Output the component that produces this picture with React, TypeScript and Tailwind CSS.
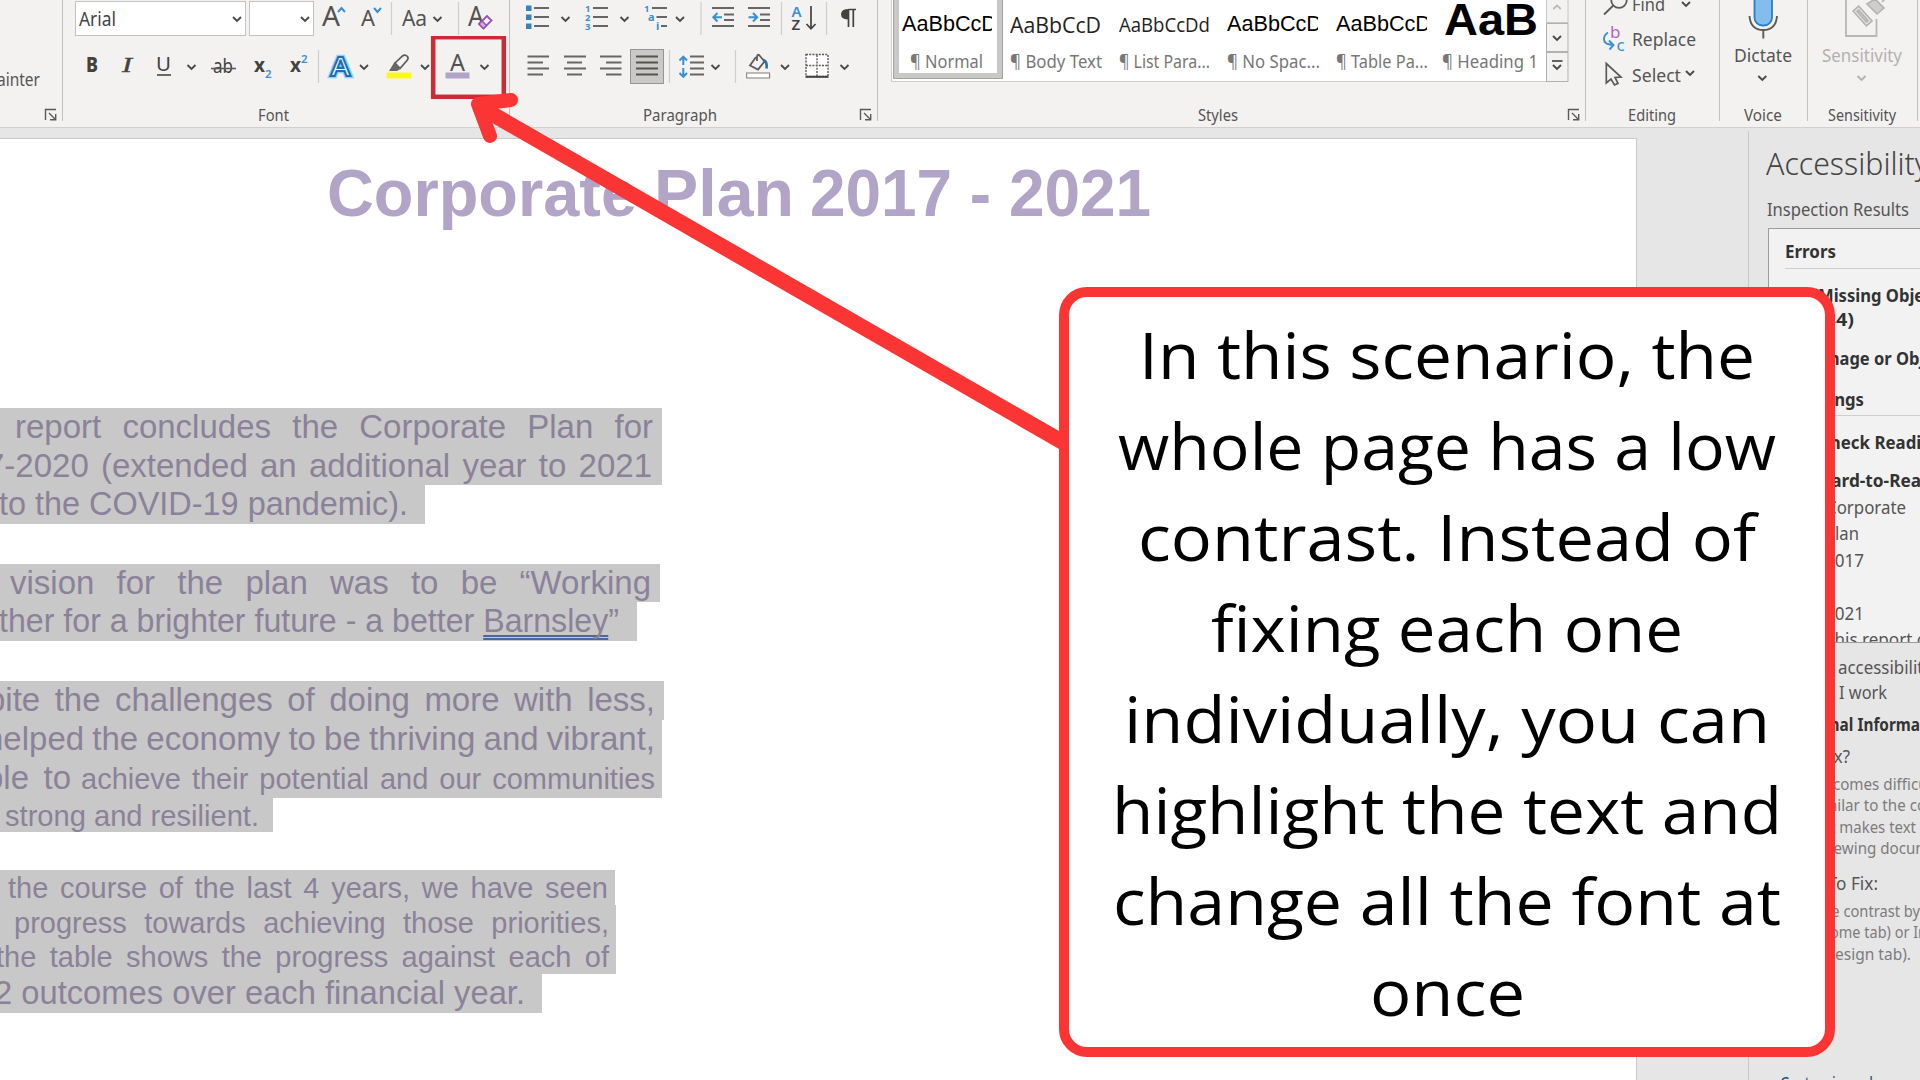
import { useLayoutEffect, useRef } from "react";
import type { ReactNode } from "react";

type FitProps = { className?: string; by?: "glyph" | "word"; children: ReactNode };

/** One line of text stretched or squeezed to the width of its box. */
function Fit({ className = "", by = "glyph", children }: FitProps) {
  const box = useRef<HTMLDivElement>(null);
  const text = useRef<HTMLSpanElement>(null);
  useLayoutEffect(() => {
    const b = box.current;
    const t = text.current;
    if (!b || !t) return;
    t.style.transform = "none";
    t.style.wordSpacing = "0px";
    const natural = t.getBoundingClientRect().width;
    const wanted = b.getBoundingClientRect().width;
    if (by === "word") {
      const gaps = (t.textContent ?? "").split(" ").length - 1;
      if (gaps > 0) t.style.wordSpacing = `${(wanted - natural) / gaps}px`;
    } else {
      t.style.transform = `scaleX(${wanted / natural})`;
    }
  });
  return (
    <div ref={box} className={"shrink-0 whitespace-nowrap " + className}>
      <span ref={text} className="inline-block origin-left whitespace-pre">
        {children}
      </span>
    </div>
  );
}

/** Icon tile; its drawing uses ribbon coordinates. */
function Tile({ x, y, w, h, children }: { x: number; y: number; w: number; h: number; children?: ReactNode }) {
  return (
    <svg width={w} height={h} viewBox={`${x} ${y} ${w} ${h}`} className="block shrink-0" fill="none">
      {children}
    </svg>
  );
}

const INK = "#5c5a58";
const BLUE = "#3b8fd0";

function Chevron({ x, y, c = "#4a4a4a" }: { x: number; y: number; c?: string }) {
  return <path d={`M${x - 4} ${y - 2} L${x} ${y + 2} L${x + 4} ${y - 2}`} stroke={c} strokeWidth="1.9" />;
}

function Rules({ rows, c = "#686664" }: { rows: [number, number, number][]; c?: string }) {
  return (
    <g stroke={c} strokeWidth="2">
      {rows.map(([a, b, y]) => (
        <line key={`${a}-${y}`} x1={a} x2={b} y1={y} y2={y} />
      ))}
    </g>
  );
}

function Sep({ x, y1, y2 }: { x: number; y1: number; y2: number }) {
  return <line x1={x} x2={x} y1={y1} y2={y2} stroke="#d0cecc" strokeWidth="1.2" />;
}

function Launcher() {
  return (
    <svg width="14" height="14" viewBox="0 0 14 14" fill="none" stroke="#5a5a5a" strokeWidth="1.4" className="shrink-0">
      <path d="M1.5 12V1.5H12" />
      <path d="M5 5L11.5 11.5M11.7 6V11.8H6" />
    </svg>
  );
}

function GroupEdge() {
  return <div className="h-[121px] w-px shrink-0 bg-[#c3c1bf]" />;
}

function FontGroup() {
  return (
    <div className="flex h-[127px] w-[446px] shrink-0 flex-col">
      <div className="flex h-9 items-start">
        <div className="ml-3 mt-px flex h-[35px] w-[171px] items-center justify-between border border-[#c4c2c0] bg-white pl-[3px]">
          <Fit className="w-[37px] text-[19px] leading-[34px] text-[#444]">Arial</Fit>
          <Tile x={228} y={2} w={16} h={33}>
            <Chevron x={236} y={19} />
          </Tile>
        </div>
        <div className="ml-[3px] mt-px flex h-[35px] w-[65px] items-center justify-end border border-[#c4c2c0] bg-white">
          <Tile x={296} y={2} w={16} h={33}>
            <Chevron x={304} y={19} />
          </Tile>
        </div>
        <Tile x={314} y={0} w={195} h={36}>
          <g fill="#55534f" fontFamily="Noto Sans, sans-serif">
            <text x="322" y="26" fontSize="28" textLength="18" lengthAdjust="spacingAndGlyphs">A</text>
            <text x="361" y="26" fontSize="22" textLength="14" lengthAdjust="spacingAndGlyphs">A</text>
            <text x="402" y="26" fontSize="21" textLength="25" lengthAdjust="spacing">Aa</text>
            <text x="468" y="26" fontSize="27" textLength="16" lengthAdjust="spacingAndGlyphs">A</text>
          </g>
          <path d="M338 12L341.5 8L345 12M374 8L377.5 12L381 8" stroke={BLUE} strokeWidth="2" />
          <Sep x={391.5} y1={2} y2={35} />
          <Chevron x={437.5} y={19} />
          <Sep x={458.5} y1={2} y2={35} />
          <path d="M479 24L487 16L491.5 20.5L483.5 28.5Z" fill="#f3f2f1" stroke="#9b4fb0" strokeWidth="1.8" />
          <path d="M479 24L482 21L486.5 25.5L483.5 28.5Z" fill="#d9a9e4" stroke="#9b4fb0" strokeWidth="1.5" />
        </Tile>
      </div>
      <div className="flex h-16">
        <Tile x={63} y={36} w={446} h={64}>
          <g fill="#44423f" fontFamily="Noto Sans, sans-serif">
            <text x="86" y="72" fontSize="21" fontWeight="800" textLength="12" lengthAdjust="spacingAndGlyphs">B</text>
            <text x="122" y="72" fontSize="21" fontStyle="italic" fontFamily="Liberation Serif, serif" stroke="#44423f" strokeWidth=".4" textLength="10" lengthAdjust="spacingAndGlyphs">I</text>
            <text x="156" y="71" fontSize="20" textLength="15" lengthAdjust="spacingAndGlyphs">U</text>
            <text x="213" y="73" fontSize="19" textLength="20" lengthAdjust="spacingAndGlyphs">ab</text>
            <text x="254" y="72" fontSize="20" fontWeight="700" textLength="11" lengthAdjust="spacingAndGlyphs">x</text>
            <text x="290" y="72" fontSize="20" fontWeight="700" textLength="11" lengthAdjust="spacingAndGlyphs">x</text>
          </g>
          <g fill={BLUE} fontFamily="Noto Sans, sans-serif" fontSize="11.5" fontWeight="600">
            <text x="265" y="78">2</text>
            <text x="301" y="62.5">2</text>
          </g>
          <line x1="157" x2="171" y1="75" y2="75" stroke={INK} strokeWidth="1.8" />
          <line x1="211" x2="236" y1="68.5" y2="68.5" stroke={INK} strokeWidth="1.6" />
          <Chevron x={191.5} y={67} />
          <Sep x={318.5} y1={50} y2={83} />
          <text x="330.5" y="75.5" fontSize="27" fontWeight="600" fontFamily="Noto Sans, sans-serif" fill="#d8ecfa" stroke="#8fd0fa" strokeWidth="4.5" textLength="20" lengthAdjust="spacingAndGlyphs">A</text>
          <text x="330.5" y="75.5" fontSize="27" fontWeight="600" fontFamily="Noto Sans, sans-serif" fill="#e9f4fc" stroke="#1f6fae" strokeWidth="1.9" textLength="20" lengthAdjust="spacingAndGlyphs">A</text>
          <Chevron x={364} y={67} />
          <rect x="386.500" y="72.500" width="25" height="6" fill="#fbf91c" />
          <path d="M395 63L402.500 56Q405 54 407.500 56.500Q408.800 58.500 407 60.500L400 68.500Z" fill="#f3f2f1" stroke={INK} strokeWidth="1.700" />
          <path d="M394.500 62L401 68.500L397 71H389Z" fill="#686664" />
          <Chevron x={425} y={67} />
          <text x="450" y="71" fontSize="23" fontFamily="Noto Sans, sans-serif" fill="#55534f" textLength="15" lengthAdjust="spacingAndGlyphs">A</text>
          <rect x="445.500" y="72.500" width="24" height="6" fill="#b1a4c6" />
          <Chevron x={484.500} y={67} />
          <rect x="433.200" y="37.200" width="70.600" height="59.600" stroke="#cb2a36" strokeWidth="4.500" />
        </Tile>
      </div>
      <Fit className="ml-[195px] w-[31px] text-[15.5px] leading-[30px] text-[#555]">Font</Fit>
    </div>
  );
}

function ParagraphGroup() {
  return (
    <div className="flex h-[127px] w-[367px] shrink-0 flex-col">
      <Tile x={510} y={0} w={367} h={40}>
        {[8, 17, 26].map((y) => (
          <rect key={y} x="526" y={y - 2.5} width="5.500" height="5.500" fill="#3a81b4" />
        ))}
        <Rules rows={[[534, 549, 8], [534, 549, 17], [534, 549, 26]]} />
        <Chevron x={565.5} y={19} />
        <g fill={BLUE} fontFamily="Noto Sans, sans-serif" fontSize="9.500" fontWeight="700">
          <text x="585" y="12">1</text>
          <text x="585" y="21">2</text>
          <text x="585" y="30">3</text>
          <text x="644" y="12">1</text>
          <text x="648" y="20.500" fontSize="11">a</text>
          <text x="656" y="30" fontSize="11">i</text>
        </g>
        <Rules rows={[[593, 608, 8], [593, 608, 17], [593, 608, 26]]} />
        <Chevron x={624.5} y={19} />
        <Rules rows={[[652, 667, 8], [656.5, 667, 17], [661, 667, 26]]} />
        <Chevron x={680} y={19} />
        <Sep x={701} y1={2} y2={35} />
        <Rules rows={[[712, 734, 8], [724, 734, 14.5], [724, 734, 20], [712, 734, 26]]} />
        <path d="M722 17.200H714M717.500 13L713.300 17.200L717.500 21.500" stroke={BLUE} strokeWidth="2" />
        <Rules rows={[[748, 770, 8], [760, 770, 14.5], [760, 770, 20], [748, 770, 26]]} />
        <path d="M748.500 17.200H756.500M753 13L757.200 17.200L753 21.500" stroke={BLUE} strokeWidth="2" />
        <Sep x={781.500} y1={2} y2={35} />
        <g fontFamily="Noto Sans, sans-serif" fontSize="15" fontWeight="600">
          <text x="791.500" y="16.500" fill={BLUE}>A</text>
          <text x="791.500" y="30" fill="#44423f">Z</text>
        </g>
        <path d="M811 6V28.500M806.500 24L811 28.800L815.500 24" stroke="#44423f" strokeWidth="1.700" />
        <Sep x={826.500} y1={2} y2={35} />
        <path d="M848.500 9.500H856M848.500 10V27M853.300 10V27" stroke="#44423f" strokeWidth="1.700" />
        <path d="M849 9V19.500Q841 19.500 841 14.200Q841 9 849 9Z" fill="#44423f" />
      </Tile>
      <Tile x={510} y={40} w={367} h={60}>
        <Rules rows={[[527.5, 549, 56.500], [527.5, 543, 62.500], [527.5, 549, 68.500], [527.5, 543, 74.500]]} />
        <Rules rows={[[564, 586, 56.500], [567, 582, 62.500], [564, 586, 68.500], [567, 582, 74.500]]} />
        <Rules rows={[[600, 621.500, 56.500], [606, 621.500, 62.500], [600, 621.500, 68.500], [606, 621.500, 74.500]]} />
        <rect x="630.500" y="49.500" width="33" height="34" fill="#cbc9c8" stroke="#979593" />
        <Rules c="#55534f" rows={[[636, 658, 56.500], [636, 658, 62.500], [636, 658, 68.500], [636, 658, 74.500]]} />
        <Sep x={669.500} y1={50} y2={83} />
        <path d="M683.300 65V57.500M679.500 60.500L683.300 56.700L687 60.500M683.300 68V76M679.500 73L683.300 76.800L687 73" stroke={BLUE} strokeWidth="2" />
        <Rules rows={[[690, 704, 56.500], [690, 704, 62.500], [690, 704, 68.500], [690, 704, 74.500]]} />
        <Chevron x={715.500} y={67} />
        <Sep x={735.500} y1={50} y2={83} />
        <path d="M756 57L750 65.500L758 69.500L764.500 61.500L759.500 55.500Q757.500 53.500 757 57V61" stroke={INK} strokeWidth="1.800" />
        <path d="M763 60Q767.500 61 766.500 68.500" stroke="#2d6da6" strokeWidth="2.600" />
        <rect x="746.600" y="73" width="23" height="5" fill="#fff" stroke="#8a8886" strokeWidth="1.100" />
        <Chevron x={785} y={67} />
        <rect x="806" y="54.500" width="22" height="22" fill="#fff" stroke={INK} strokeWidth="1.400" strokeDasharray="2 1.200" />
        <path d="M817 55V76M806 65.500H828" stroke={INK} strokeWidth="1.400" strokeDasharray="2 1.200" />
        <path d="M805.500 76.800H828.500" stroke="#44423f" strokeWidth="2" />
        <Chevron x={844.500} y={67} />
      </Tile>
      <div className="flex items-start">
        <Fit className="ml-[133px] w-[74px] text-[15.5px] leading-[30px] text-[#555]">Paragraph</Fit>
        <div className="ml-[142px] mt-2">
          <Launcher />
        </div>
      </div>
    </div>
  );
}

function StylesGroup() {
  return (
    <div className="flex h-[127px] w-[707px] shrink-0 flex-col">
      <div className="ml-[13px] flex h-[82px] w-[678px]">
        <div className="flex h-[82px] w-[655px] border-b border-l border-[#cfcdcb] bg-white">
          <div className="ml-px h-[79px] w-[110px] shrink-0 border border-t-0 border-[#a3a3a3]">
            <div className="h-[78px] border-[5px] border-t-0 border-[#c8c8c6] pl-[3px]">
              <div className="w-[90px] overflow-hidden">
                <Fit className="h-9 w-[95px] font-['Liberation_Sans'] text-[22px] leading-[48px] text-black">AaBbCcD</Fit>
              </div>
              <Fit className="ml-2 w-[73px] text-[17.5px] leading-[50px] text-[#777]">¶ Normal</Fit>
            </div>
          </div>
          <div className="ml-[7px] w-[109px] shrink-0">
            <Fit className="h-9 w-[91px] font-['Open_Sans'] text-[22px] leading-[49px] text-[#222]">AaBbCcD</Fit>
            <Fit className="w-[92px] text-[17.5px] leading-[50px] text-[#777]">¶ Body Text</Fit>
          </div>
          <div className="w-[108px] shrink-0">
            <Fit className="h-9 w-[91px] font-['Open_Sans'] text-[19.5px] leading-[50px] text-[#222]">AaBbCcDd</Fit>
            <Fit className="w-[91px] text-[17.5px] leading-[50px] text-[#777]">¶ List Para...</Fit>
          </div>
          <div className="w-[109px] shrink-0">
            <div className="w-[91px] overflow-hidden">
              <Fit className="h-9 w-[95px] font-['Liberation_Sans'] text-[22px] leading-[48px] text-black">AaBbCcD</Fit>
            </div>
            <Fit className="w-[93px] text-[17.5px] leading-[50px] text-[#777]">¶ No Spac...</Fit>
          </div>
          <div className="w-[106px] shrink-0">
            <div className="w-[91px] overflow-hidden">
              <Fit className="h-9 w-[95px] font-['Liberation_Sans'] text-[22px] leading-[48px] text-black">AaBbCcD</Fit>
            </div>
            <Fit className="w-[92px] text-[17.5px] leading-[50px] text-[#777]">¶ Table Pa...</Fit>
          </div>
          <div className="w-[98px] shrink-0">
            <Fit className="ml-[2px] h-9 w-[94px] font-['Liberation_Sans'] text-[45px] font-bold leading-[39px] text-black">AaB</Fit>
            <Fit className="w-[96px] text-[17.5px] leading-[50px] text-[#777]">¶ Heading 1</Fit>
          </div>
        </div>
        <Tile x={1541} y={0} w={23} h={82}>
          <path d="M1541.500 -2V22.500H1563V-2" stroke="#c8c6c4" />
          <rect x="1541.500" y="23.500" width="21.500" height="28" stroke="#b3b1af" />
          <rect x="1541.500" y="52.500" width="21.500" height="29" stroke="#b3b1af" />
          <path d="M1548.200 9L1552 5.500L1555.800 9" stroke="#bbb" strokeWidth="1.700" />
          <Chevron x={1552} y={38} />
          <path d="M1547 61H1557.500" stroke="#4a4a4a" strokeWidth="1.700" />
          <Chevron x={1552} y={67} />
        </Tile>
      </div>
      <div className="mt-[18px] flex items-start">
        <Fit className="ml-[320px] w-[40px] text-[15.5px] leading-[30px] text-[#555]">Styles</Fit>
        <div className="ml-[329px] mt-2">
          <Launcher />
        </div>
      </div>
    </div>
  );
}

function EditingGroup() {
  return (
    <div className="flex h-[127px] w-[133px] shrink-0 flex-col">
      <div className="flex h-[100px]">
        <Tile x={1586} y={0} w={46} h={100}>
          <circle cx="1619" cy="0" r="7.800" stroke={INK} strokeWidth="1.800" />
          <path d="M1613.300 5.500L1604 14.500" stroke={INK} strokeWidth="1.800" />
          <g fontFamily="Noto Sans, sans-serif" fontSize="17">
            <text x="1610" y="38" fill="#b661c4">b</text>
            <text x="1616.500" y="51" fill={BLUE}>c</text>
          </g>
          <path d="M1608 32.500Q1602.500 36 1604.500 41.500Q1606 44.500 1613 45M1609 40.500L1613.500 45L1609.500 49.500" stroke={BLUE} strokeWidth="1.900" />
          <path d="M1606.300 63.500V83L1611 79L1614.500 85L1618 83.300L1615 77.500L1621 77Z" stroke={INK} strokeWidth="1.700" />
        </Tile>
        <div className="flex w-[64px] flex-col text-[17.5px] text-[#555]">
          <Fit className="h-[27px] w-[33px] leading-[9px]">Find</Fit>
          <Fit className="h-9 w-[64px] leading-[24px]">Replace</Fit>
          <Fit className="w-[49px] leading-[24px]">Select</Fit>
        </div>
      </div>
      <Fit className="ml-[42px] w-[48px] text-[15.5px] leading-[30px] text-[#555]">Editing</Fit>
    </div>
  );
}

function VoiceGroup() {
  return (
    <div className="flex h-[127px] w-[87px] shrink-0 flex-col">
      <Tile x={1720} y={0} w={87} h={42}>
        <rect x="1754.500" y="-20" width="17.500" height="45.500" rx="8" fill="#83bdee" stroke="#2b7fc7" strokeWidth="1.800" />
        <path d="M1749.500 16Q1750.500 30 1763.300 30Q1776 30 1777 16M1763.300 30V38.500" stroke={INK} strokeWidth="1.900" />
      </Tile>
      <Fit className="ml-[14px] h-[26px] w-[58px] text-[17.5px] leading-[26px] text-[#555]">Dictate</Fit>
      <Tile x={1720} y={68} w={87} h={32}>
        <Chevron x={1762.300} y={78} />
      </Tile>
      <Fit className="ml-6 w-[38px] text-[15.5px] leading-[30px] text-[#555]">Voice</Fit>
    </div>
  );
}

function SensitivityGroup() {
  return (
    <div className="flex h-[127px] w-[109px] shrink-0 flex-col">
      <Tile x={1808} y={0} w={109} h={42}>
        <path d="M1846 -2V36H1876.500V19" stroke="#b9b7b5" strokeWidth="1.800" />
        <g stroke="#b5b3b1" strokeWidth="1.600">
          <rect x="1863" y="6.500" width="7.500" height="20" fill="#e3e1df" transform="translate(-4 0) rotate(-42 1866 16.500)" />
          <rect x="1865.700" y="9.500" width="2" height="14" transform="translate(-4 0) rotate(-42 1866 16.500)" />
          <path d="M1867 4L1877 14L1884 8L1875 -1Z" fill="#cfcdcb" />
          <path d="M1882 2L1886 -2" />
        </g>
      </Tile>
      <Fit className="ml-[14px] h-[26px] w-[80px] text-[17.5px] leading-[26px] text-[#b3b1af]">Sensitivity</Fit>
      <Tile x={1808} y={68} w={109} h={32}>
        <Chevron x={1861.500} y={78} c="#b3b1af" />
      </Tile>
      <Fit className="ml-5 w-[68px] text-[15.5px] leading-[30px] text-[#555]">Sensitivity</Fit>
    </div>
  );
}

function Ribbon() {
  return (
    <header className="flex h-32 w-[1920px] shrink-0 overflow-hidden border-b border-[#d2d0ce] bg-[#f3f2f1]">
      <div className="flex h-[127px] w-[62px] shrink-0 flex-col">
        <Fit className="-ml-[3px] mt-[66px] h-[42px] w-[43px] text-[17.5px] leading-[26px] text-[#555]">ainter</Fit>
        <div className="ml-[44px]">
          <Launcher />
        </div>
      </div>
      <GroupEdge />
      <FontGroup />
      <GroupEdge />
      <ParagraphGroup />
      <GroupEdge />
      <StylesGroup />
      <GroupEdge />
      <div className="relative">
        <EditingGroup />
        <svg className="absolute left-[90px] top-0" width="24" height="90" viewBox="1676 0 24 90" fill="none">
          <Chevron x={1686} y={4} />
          <Chevron x={1690} y={73} />
        </svg>
      </div>
      <GroupEdge />
      <VoiceGroup />
      <GroupEdge />
      <SensitivityGroup />
      <GroupEdge />
    </header>
  );
}

function Page() {
  return (
    <article className="mt-[10px] h-[942px] w-[1637px] overflow-hidden border-r border-t border-[#c9c9c9] bg-white font-['Liberation_Sans',sans-serif] text-[33px] leading-[37px] text-[#8b8299]">
      <h1 className="ml-[327px] mt-4 flex h-[76px] text-[66px] font-bold leading-[76px] text-[#b1a4c6]">
        <Fit className="w-[310px]">Corporate</Fit>
        <Fit className="ml-[17px] w-[140px]">Plan</Fit>
        <Fit className="ml-4 w-[341px]">2017 - 2021</Fit>
      </h1>

      <section className="mt-[177px]">
        <div className="h-[38.5px] w-[662px] bg-[#c8c8c8]">
          <Fit by="word" className="ml-[15px] w-[638px]">report concludes the Corporate Plan for</Fit>
        </div>
        <div className="h-[38.5px] w-[662px] bg-[#c8c8c8]">
          <Fit by="word" className="-ml-[14px] w-[666px] leading-[38px]">7-2020 (extended an additional year to 2021</Fit>
        </div>
        <div className="h-[39px] w-[425px] bg-[#c8c8c8]">
          <Fit className="-ml-px w-[409px]">to the COVID-19 pandemic).</Fit>
        </div>
      </section>

      <section className="mt-[39.5px]">
        <div className="h-[38.5px] w-[660px] bg-[#c8c8c8]">
          <Fit by="word" className="ml-[10px] w-[641px]">vision for the plan was to be “Working</Fit>
        </div>
        <div className="h-[38.5px] w-[637px] bg-[#c8c8c8]">
          <Fit className="-ml-px w-[620px]">
            ther for a brighter future - a better{" "}
            <span className="underline decoration-[#4a66a5] decoration-double decoration-2 underline-offset-[3px] [text-decoration-skip-ink:none]">Barnsley</span>”
          </Fit>
        </div>
      </section>

      <section className="mt-[40.5px]">
        <div className="h-[39px] w-[664px] bg-[#c8c8c8]">
          <Fit by="word" className="-ml-[13px] w-[668px]">pite the challenges of doing more with less,</Fit>
        </div>
        <div className="h-[39px] w-[662px] bg-[#c8c8c8]">
          <Fit by="word" className="-ml-[15px] w-[670px]">helped the economy to be thriving and vibrant,</Fit>
        </div>
        <div className="flex h-[38.5px] w-[662px] items-baseline bg-[#c8c8c8]">
          <Fit by="word" className="-ml-[15px] w-[86px] leading-[38px]">ble to</Fit>
          <Fit by="word" className="ml-[10px] w-[574px] text-[29px]">achieve their potential and our communities</Fit>
        </div>
        <div className="h-[34px] w-[273px] bg-[#c8c8c8]">
          <Fit className="ml-[5px] w-[254px] text-[29px] leading-9">strong and resilient.</Fit>
        </div>
      </section>

      <section className="mt-[38.5px] text-[29px] leading-9">
        <div className="h-[35px] w-[615px] bg-[#c8c8c8]">
          <Fit by="word" className="ml-2 w-[600px]">the course of the last 4 years, we have seen</Fit>
        </div>
        <div className="h-[34.5px] w-[616px] bg-[#c8c8c8]">
          <Fit by="word" className="ml-[14px] w-[595px]">progress towards achieving those priorities,</Fit>
        </div>
        <div className="h-[34.5px] w-[616px] bg-[#c8c8c8]">
          <Fit by="word" className="-ml-[4px] w-[613px] leading-[35px]">the table shows the progress against each of</Fit>
        </div>
        <div className="h-[38.5px] w-[542px] bg-[#c8c8c8]">
          <Fit className="-ml-[6px] w-[531px] text-[33px] leading-[37px]">2 outcomes over each financial year.</Fit>
        </div>
      </section>
    </article>
  );
}

function AccessibilityPane() {
  return (
    <aside className="mt-[3px] h-[949px] w-[172px] overflow-hidden border-l border-[#c9c9c9] bg-[#e6e6e6] text-[17.5px] leading-6 text-[#555]">
      <Fit className="ml-[17px] mt-[14px] h-[52px] w-[163px] text-[31px] font-light leading-[36px] text-[#444]">Accessibility</Fit>
      <Fit className="ml-[18px] h-[31px] w-[142px]">Inspection Results</Fit>

      <div className="ml-[19px] h-[415px] w-[160px] overflow-hidden border border-[#9c9c9c] bg-[#f2f2f2]">
        <div className="ml-4 h-10 border-b border-[#cfcfcf] pt-2.5 font-bold text-[#333]">
          <Fit className="w-[51px]">Errors</Fit>
        </div>
        <div className="pt-[14px] font-bold text-[#333]">
          <Fit className="ml-[49px] h-6 w-[122px]">Missing Object</Fit>
          <Fit className="ml-[49px] h-[38.5px] w-9">(84)</Fit>
          <Fit className="ml-[48px] h-[41px] w-[133px]">Image or Object</Fit>
        </div>
        <div className="ml-4 h-[29px] border-b border-[#cfcfcf] font-bold text-[#333]">
          <Fit className="w-[79px]">Warnings</Fit>
        </div>
        <div className="pt-[14px] font-bold text-[#333]">
          <Fit className="ml-[50px] h-[38px] w-[124px]">Check Reading</Fit>
          <Fit className="ml-[49px] h-[27px] w-[114px]">Hard-to-Read</Fit>
        </div>
        <Fit className="ml-[57px] h-[26px] w-[80px]">Corporate</Fit>
        <Fit className="ml-[56px] h-[27px] w-[34px]">Plan</Fit>
        <Fit className="ml-[56px] h-[53px] w-[39px]">2017</Fit>
        <Fit className="ml-[56px] h-[26px] w-[39px]">2021</Fit>
        <Fit className="ml-[56px] h-[26px] w-[100px]">This report c</Fit>
      </div>

      <Fit className="ml-[89px] mt-3 h-[25px] w-[94px]">accessibility</Fit>
      <Fit className="ml-[90px] h-[32px] w-[48px]">I work</Fit>
      <Fit className="ml-[25px] h-[32px] w-[177px] font-bold text-[#333]">Additional Information</Fit>
      <Fit className="ml-[33px] h-[29px] w-[68px]">Why Fix?</Fit>
      <div className="text-[15.5px] leading-[22px] text-[#7c7c7c]">
        <Fit className="ml-[66px] h-[21px] w-[122px]">becomes difficult</Fit>
        <Fit className="ml-[63px] h-[21.500px] w-[118px]">similar to the col</Fit>
        <Fit className="ml-[76px] h-[21.500px] w-[91px]">It makes text</Fit>
        <Fit className="ml-[73px] h-[34px] w-[116px]">viewing docume</Fit>
      </div>
      <Fit className="ml-[38px] h-[29px] w-[91px]">How To Fix:</Fit>
      <div className="text-[15.5px] leading-[22px] text-[#7c7c7c]">
        <Fit className="ml-[68px] h-[21px] w-[103px]">the contrast by</Fit>
        <Fit className="ml-[66px] h-[21.500px] w-[112px]">(Home tab) or In</Fit>
        <Fit className="ml-[70px] h-[128px] w-[92px]">(Design tab).</Fit>
      </div>
      <Fit className="ml-[31px] w-[108px] text-[#1f4e79]">Customise rules</Fit>
    </aside>
  );
}

function Callout() {
  return (
    <div className="absolute left-[1059px] top-[287px] flex h-[770px] w-[776px] flex-col items-center rounded-[28px] border-[10px] border-[#fb3434] bg-white pt-3 font-['Open_Sans',sans-serif] text-[64px] leading-[91px] text-black">
      <Fit className="w-[616px]">In this scenario, the</Fit>
      <Fit className="w-[658px]">whole page has a low</Fit>
      <Fit className="w-[618px]">contrast. Instead of</Fit>
      <Fit className="w-[472px]">fixing each one</Fit>
      <Fit className="w-[646px]">individually, you can</Fit>
      <Fit className="w-[670px]">highlight the text and</Fit>
      <Fit className="w-[668px]">change all the font at</Fit>
      <Fit className="w-[155px]">once</Fit>
    </div>
  );
}

export default function App() {
  return (
    <div className="relative flex h-[1080px] w-[1920px] flex-col overflow-hidden bg-[#e6e6e6] font-['Noto_Sans',sans-serif]">
      <Ribbon />
      <main className="flex h-[952px]">
        <div className="w-[1748px] shrink-0">
          <Page />
        </div>
        <AccessibilityPane />
      </main>
      <svg className="absolute left-0 top-0" width="1100" height="480" viewBox="0 0 1100 480" fill="none" stroke="#fb3434">
        <path d="M1066 444L480 107" strokeWidth="15.500" />
        <path d="M511 100L478 104L490 136" strokeWidth="14" strokeLinecap="round" strokeLinejoin="round" />
      </svg>
      <Callout />
    </div>
  );
}
